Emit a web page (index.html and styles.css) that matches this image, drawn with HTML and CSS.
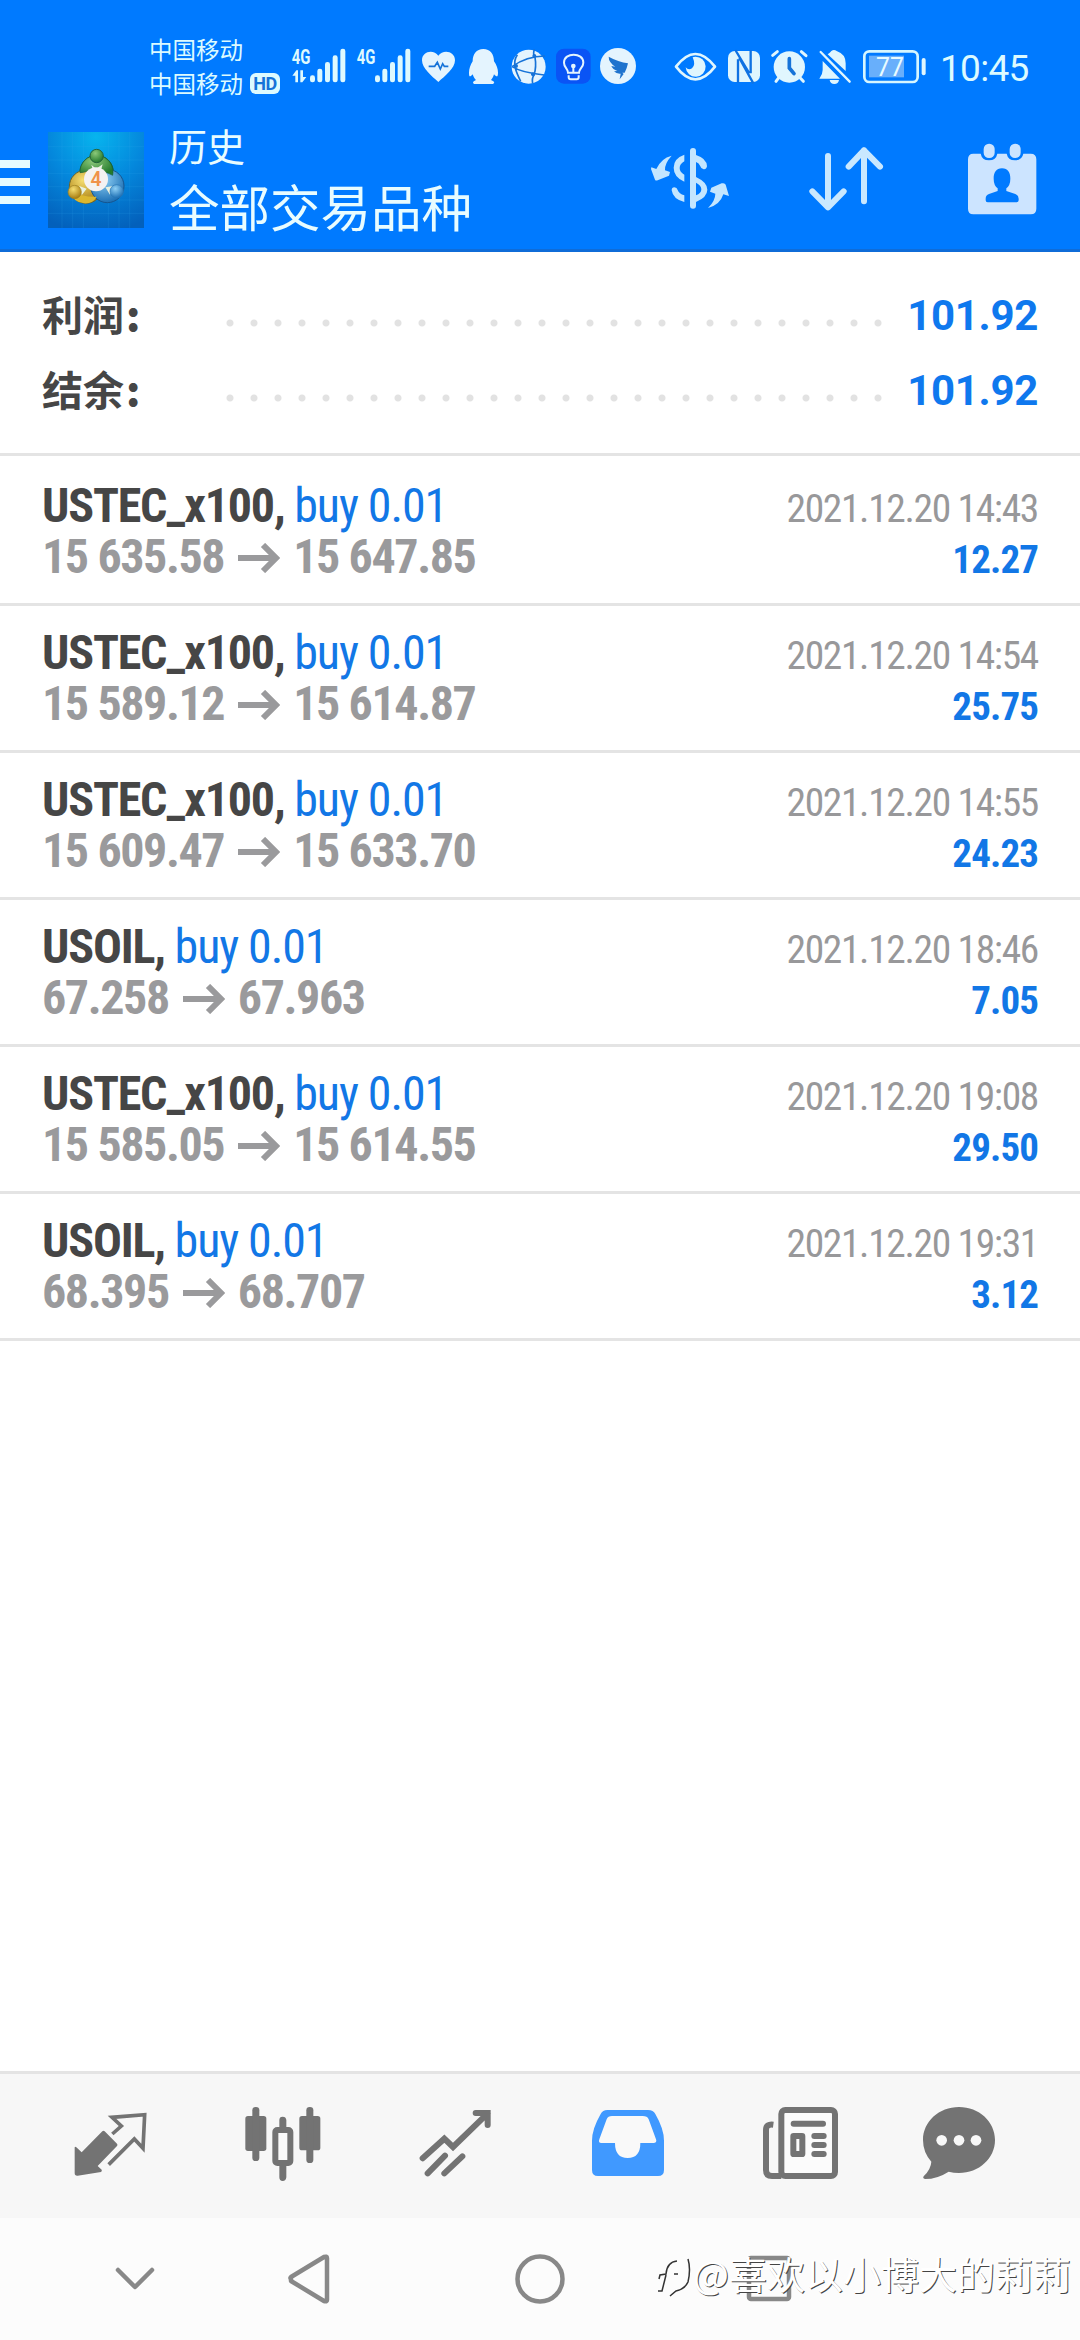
FILE: index.html
```html
<!DOCTYPE html>
<html lang="zh-CN">
<head>
<meta charset="utf-8">
<title>历史</title>
<link rel="stylesheet" href="styles.css">
</head>
<body>
<div class="screen">
  <header class="top">
    <div class="status">
      <div class="carriers">
        <div class="carrier">中国移动</div>
        <div class="carrier">中国移动<span class="hd">HD</span></div>
      </div>
      <svg class="signals" width="126" height="50" viewBox="480 60 378 150">
        <g fill="#def9fe">
          <text class="net" x="485" y="131" textLength="56" lengthAdjust="spacingAndGlyphs">4G</text>
          <text class="net" x="680" y="131" textLength="56" lengthAdjust="spacingAndGlyphs">4G</text>
          <path d="M487 167l12-16h5v36h-8v-20zM511 151h8v20h10l-12 16h-6z"/>
          <g id="bars">
            <rect x="540" y="166" width="15" height="21" rx="7"/>
            <rect x="562" y="146" width="15" height="41" rx="7"/>
            <rect x="585" y="126" width="15" height="61" rx="7"/>
            <rect x="608" y="106" width="15" height="81" rx="7"/>
            <rect x="631" y="86" width="15" height="101" rx="7"/>
          </g>
          <use href="#bars" x="195"/>
        </g>
      </svg>
      <svg class="notices" width="220" height="50" viewBox="60 60 660 150">
        <g fill="#e4f4fe">
          <path d="M115 186C95 168 66 145 66 121C66 93 101 87 115 107C129 87 165 93 165 121C165 145 135 168 115 186z"/>
          <path d="M86 139h18l8-12 9 20 7-16 5 8h12" fill="none" stroke="#1673d8" stroke-width="5"/>
          <path d="M250 87C229 87 218 103 218 124C211 134 207 148 207 158C207 170 209 173 218 163C221 172 224 176 228 180C216 185 217 192 226 192H275C285 192 286 185 273 180C277 176 280 171 282 163C291 173 294 170 294 158C294 148 290 134 282 124C282 103 271 87 250 87z"/>
          <circle cx="386" cy="140" r="51"/>
          <g fill="none" stroke="#1673d8" stroke-width="5">
            <path d="M336 140Q380 108 435 108M403 88Q398 105 405 112Q410 140 402 165Q395 175 398 190M336 140Q365 158 432 165M352 104Q340 122 346 145Q350 160 362 184"/>
          </g>
          <circle cx="403" cy="108" r="6" fill="#1673d8"/><circle cx="348" cy="138" r="6" fill="#1673d8"/><circle cx="399" cy="163" r="6" fill="#1673d8"/>
          <rect x="468" y="86" width="104" height="105" rx="24" fill="#0a54f5"/>
          <g fill="none" stroke="#e4f4fe" stroke-width="6">
            <path d="M504 158C504 145 492 143 492 128C492 96 550 96 550 128C550 143 537 145 537 158zM520 138v20M506 166v6q0 6 6 6h18q6 0 6-6v-6"/>
          </g>
          <circle cx="520" cy="138" r="7"/>
          <circle cx="654" cy="138" r="54"/>
          <path d="M626 110Q655 126 684 130Q681 145 674 158L667 158L671 162L659 178L662 161Q649 162 642 154L652 153Q638 148 634 138L646 140Q626 127 626 110z" fill="#1e73ce"/>
        </g>
      </svg>
      <svg class="system" width="252" height="50" viewBox="42 60 756 150">
        <g fill="#e0f6fe">
          <path d="M48 140Q106 64 165 140Q106 216 48 140z" fill="none" stroke="#e0f6fe" stroke-width="8" stroke-linejoin="round"/>
          <path d="M106 110A30 30 0 1 1 77 142Q85 152 96 145Q108 135 98 112z"/>
          <rect x="204" y="93" width="96" height="93" rx="20"/>
          <path d="M226 90L268 160M234 118V188M272 90V160M238 114L280 190" fill="none" stroke="#0f72e2" stroke-width="7"/>
          <circle cx="388" cy="141" r="47"/>
          <path d="M338 106l14-11M424 95l14 12M348 184l9-12M420 173l10 11" stroke="#e0f6fe" stroke-width="9" stroke-linecap="round"/>
          <path d="M388 116v28l14 17" fill="none" stroke="#1673d8" stroke-width="11" stroke-linecap="round"/>
          <path d="M488 123L540 176H478Q488 164 488 150zM503 103Q510 98 514 93Q522 87 530 93Q557 102 557 130V153zM509 180h28q-2 12-14 12t-14-12z"/>
          <path d="M482 96l87 89" stroke="#e0f6fe" stroke-width="7" stroke-linecap="round"/>
          <rect x="613" y="94" width="160" height="92" rx="15" fill="none" stroke="#d6f6ff" stroke-width="8"/>
          <rect x="627" y="107" width="105" height="65" fill="#68affb"/>
          <rect x="785" y="114" width="12" height="52" rx="6"/>
          <text class="charge" x="648" y="169" textLength="84" lengthAdjust="spacingAndGlyphs">77</text>
        </g>
      </svg>
      <span class="clock">10:45</span>
    </div>
    <div class="bar">
      <div class="menu"><i></i><i></i><i></i></div>
      <svg class="logo" width="96" height="96" viewBox="144 66 288 288">
        <defs>
          <radialGradient id="sky" cx=".5" cy=".05" r="1"><stop offset="0" stop-color="#07b4ee"/><stop offset=".5" stop-color="#0487dc"/><stop offset="1" stop-color="#0360bb"/></radialGradient>
          <radialGradient id="gr" cx=".4" cy=".3" r=".7"><stop offset="0" stop-color="#8cc97a"/><stop offset="1" stop-color="#247a2c"/></radialGradient>
          <radialGradient id="ye" cx=".4" cy=".3" r=".7"><stop offset="0" stop-color="#f5de71"/><stop offset="1" stop-color="#a87d12"/></radialGradient>
          <radialGradient id="bl" cx=".4" cy=".3" r=".7"><stop offset="0" stop-color="#8fd0f5"/><stop offset="1" stop-color="#1d70b5"/></radialGradient>
        </defs>
        <rect x="144" y="66" width="288" height="288" fill="url(#sky)"/>
        <path d="M186 66v288M218 66v288M250 66v288M325 66v288M357 66v288M389 66v288M144 110h288M144 150h288M144 190h288M144 230h288M144 270h288M144 310h288" stroke="#3fb6f0" stroke-opacity=".22" stroke-width="2"/>
        <circle cx="290" cy="186" r="50" fill="url(#gr)" stroke="#175f38" stroke-width="3"/>
        <circle cx="258" cy="230" r="50" fill="url(#ye)" stroke="#6e6428" stroke-width="3"/>
        <circle cx="322" cy="228" r="50" fill="url(#bl)" stroke="#16558f" stroke-width="3"/>
        <path d="M290 136a50 50 0 0 1 48 60q-14-10-30-8q-26-18-48-4q-10 4-20 4a50 50 0 0 1 50-52z" fill="url(#gr)" stroke="#175f38" stroke-width="2"/>
        <path d="M210 242q40 20 80 18q-12 22-38 20q-34-4-42-38z" fill="#dbb72f"/>
        <path d="M274 164l14 12 20-13-5 18h-24zM238 228l22 8-15 20zM340 228l-24 4 14 22z" fill="#e8f1e0"/>
        <circle cx="290" cy="138" r="20" fill="url(#gr)" stroke="#24633a" stroke-width="3"/>
        <circle cx="224" cy="246" r="20" fill="url(#ye)" stroke="#9c7f1e" stroke-width="2"/>
        <circle cx="350" cy="244" r="20" fill="url(#bl)" stroke="#2a77b5" stroke-width="2"/>
        <circle cx="288" cy="208" r="36" fill="#f4f2f2"/>
        <text class="four" x="288" y="229">4</text>
      </svg>
      <div class="titles">
        <div class="title">历史</div>
        <div class="subtitle">全部交易品种</div>
      </div>
      <div class="actions">
        <svg width="80" height="64" viewBox="90 80 240 192">
          <g fill="#c4e6ff">
            <rect x="210" y="83" width="18" height="182" rx="9"/>
            <path d="M193 103v20q-14 8-14 20t14 20v21q-32-14-32-42t32-39zM228 104q32 10 33 34q-2 10-10 9t-10-9q-4-10-13-13zM228 170q34 16 34 38t-34 37v-20q16-6 16-18t-16-20zM155 210q0-9 8-9t10 8q4 12 20 16v20q-34-8-38-35z"/>
            <path d="M155 106q-22 24-20 44l15 5-3 11-34 14q-6 2-8-2l-12-32 1-5 15 5q14-32 46-40z"/>
            <path d="M264 263q22-22 22-43l-16-6 4-12 31-13q10-2 12 4l10 34-17-5q-10 32-46 41z"/>
          </g>
        </svg>
        <svg class="sort" width="76" height="66" viewBox="564 80 228 198">
          <path d="M624 110v154M577 216l47 48 47-48M732 246V93M686 142l46-49 48 49" fill="none" stroke="#c9e8ff" stroke-width="18" stroke-linecap="round" stroke-linejoin="round"/>
        </svg>
        <svg width="70" height="74" viewBox="1041 66 210 222">
          <path d="M1060 101h22q4 20 25 20t25-20h28q4 20 25 20t25-20h22q17 0 17 17v148q0 17-17 17h-172q-16 0-16-17V118q0-17 16-17z" fill="#cce4ff"/>
          <rect x="1091" y="71" width="33" height="43" rx="16" fill="#cce4ff"/><rect x="1169" y="71" width="33" height="43" rx="16" fill="#cce4ff"/>
          <path d="M1146 145c18 0 25 14 25 31q0 20-12 29v8l27 9q10 4 10 14v5q0 6-7 6h-86q-6 0-6-6v-5q0-10 10-14l26-9v-8q-12-9-12-29c0-17 7-31 25-31z" fill="#007aff"/>
        </svg>
      </div>
    </div>
  </header>

  <section class="summary">
    <div class="sum"><span class="label">利润<b>:</b></span><span class="dots"></span><span class="total">101.92</span></div>
    <div class="sum"><span class="label">结余<b>:</b></span><span class="dots"></span><span class="total">101.92</span></div>
  </section>

  <main class="deals">
    <article class="deal">
      <div class="line"><span><b class="sym">USTEC_x100,</b> <span class="side">buy 0.01</span></span><time>2021.12.20 14:43</time></div>
      <div class="line"><span class="price">15 635.58<svg class="arrow" viewBox="0 0 42 30"><path d="M0 15H38M25 2L38 15L25 28"/></svg>15 647.85</span><b class="profit">12.27</b></div>
    </article>
    <article class="deal">
      <div class="line"><span><b class="sym">USTEC_x100,</b> <span class="side">buy 0.01</span></span><time>2021.12.20 14:54</time></div>
      <div class="line"><span class="price">15 589.12<svg class="arrow" viewBox="0 0 42 30"><path d="M0 15H38M25 2L38 15L25 28"/></svg>15 614.87</span><b class="profit">25.75</b></div>
    </article>
    <article class="deal">
      <div class="line"><span><b class="sym">USTEC_x100,</b> <span class="side">buy 0.01</span></span><time>2021.12.20 14:55</time></div>
      <div class="line"><span class="price">15 609.47<svg class="arrow" viewBox="0 0 42 30"><path d="M0 15H38M25 2L38 15L25 28"/></svg>15 633.70</span><b class="profit">24.23</b></div>
    </article>
    <article class="deal">
      <div class="line"><span><b class="sym">USOIL,</b> <span class="side">buy 0.01</span></span><time>2021.12.20 18:46</time></div>
      <div class="line"><span class="price">67.258<svg class="arrow" viewBox="0 0 42 30"><path d="M0 15H38M25 2L38 15L25 28"/></svg>67.963</span><b class="profit">7.05</b></div>
    </article>
    <article class="deal">
      <div class="line"><span><b class="sym">USTEC_x100,</b> <span class="side">buy 0.01</span></span><time>2021.12.20 19:08</time></div>
      <div class="line"><span class="price">15 585.05<svg class="arrow" viewBox="0 0 42 30"><path d="M0 15H38M25 2L38 15L25 28"/></svg>15 614.55</span><b class="profit">29.50</b></div>
    </article>
    <article class="deal">
      <div class="line"><span><b class="sym">USOIL,</b> <span class="side">buy 0.01</span></span><time>2021.12.20 19:31</time></div>
      <div class="line"><span class="price">68.395<svg class="arrow" viewBox="0 0 42 30"><path d="M0 15H38M25 2L38 15L25 28"/></svg>68.707</span><b class="profit">3.12</b></div>
    </article>
  </main>

  <nav class="tabs">
    <svg width="76" height="78" viewBox="98 135 228 234">
      <path d="M103 262q2-3 5 0l16 15 62-63q3-3 7 0l37 37q3 4 0 7l-58 60 12 11q2 4-2 7l-70 11q-9 1-9-8z" fill="#737373"/>
      <path d="M216 222l27-24-28-26 98-8-5 101-26-28-77 77" fill="none" stroke="#737373" stroke-width="11"/>
    </svg>
    <svg width="76" height="78" viewBox="611 135 228 234">
      <g fill="#737373"><rect x="612" y="168" width="63" height="105" rx="8"/><rect x="633" y="141" width="21" height="162" rx="10"/><rect x="774" y="168" width="63" height="103" rx="8"/><rect x="795" y="141" width="21" height="168" rx="10"/><path d="M714 202v-22q0-10 10-10t11 10v22zM714 316v36q0 11 10 11t11-11v-36z"/></g>
      <rect x="702" y="210" width="45" height="99" rx="6" fill="#fafafa" stroke="#737373" stroke-width="18"/>
    </svg>
    <svg width="76" height="78" viewBox="1129 135 228 234">
      <path d="M1143 295l65-59 26 25 104-101M1302 159h36v36M1158 340l52-53M1208 340l54-51" fill="none" stroke="#737373" stroke-width="18" stroke-linecap="round" stroke-linejoin="miter"/>
    </svg>
    <svg width="76" height="78" viewBox="86 135 228 234">
      <path d="M138 150h122q16 0 22 12 26 45 26 80v88q0 18-18 18H110q-18 0-18-18v-88q0-35 26-80 6-12 20-12z" fill="#4099ff"/>
      <path d="M152 168q-12 0-16 10l-22 60q-4 11 6 11h41q0 45 38 45t38-45h39q12 0 8-11l-22-60q-4-10-18-10z" fill="#f9f9f9"/>
    </svg>
    <svg width="76" height="78" viewBox="607 135 228 234">
      <rect x="662" y="150" width="161" height="198" rx="12" fill="#fbfbfb" stroke="#737373" stroke-width="18"/>
      <path d="M638 194q-22-3-22 16v120q0 18 18 18h28" fill="none" stroke="#737373" stroke-width="18"/>
      <path d="M699 191.500h88M761 228h28M761 255h28M761 282h28" stroke="#737373" stroke-width="18" stroke-linecap="round"/>
      <rect x="698" y="228" width="27" height="54" rx="1" fill="#fbfbfb" stroke="#737373" stroke-width="18" stroke-linejoin="round"/>
    </svg>
    <svg class="chat" width="76" height="78" viewBox="1080 135 228 234">
      <path d="M1194 141c60 0 108 44 108 99s-48 99-108 99q-16 0-31-4-34 22-71 22-8-2-4-8 22-22 23-44-25-28-25-65c0-55 48-99 108-99z" fill="#737373"/>
      <g fill="#f8f8f8"><circle cx="1142" cy="241" r="16"/><circle cx="1194" cy="241" r="16"/><circle cx="1245" cy="241" r="16"/></g>
    </svg>
  </nav>

  <footer class="system-nav">
    <svg width="720" height="60" viewBox="100 2249 720 60">
      <g fill="none" stroke="#888" stroke-width="4.500" stroke-linecap="round" stroke-linejoin="round">
        <path d="M118 2270l17 17 17-17M291 2279q-1-1 0-2l33-20q3-1 3 1v42q0 2-3 1l-33-20z"/>
        <circle cx="540" cy="2279" r="22.500"/>
        <rect x="749" y="2258" width="40" height="41" rx="2"/>
      </g>
    </svg>
    <div class="watermark">
      <svg width="36" height="50" viewBox="0 0 36 50">
        <path d="M2 31l1-4 6-1q1-12 11-13M31 11q3 10 0 23-3 7-12 9l-6 5M9 27L5 43H1M17 26h4" fill="none" stroke="#333" stroke-width="1.500"/>
      </svg>
      <span>@喜欢以小博大的莉莉</span>
    </div>
  </footer>
</div>
</body>
</html>
```

FILE: styles.css
```css
* { box-sizing: border-box; }
body { margin: 0; background: #fff; font-family: Roboto, "Noto Sans CJK SC", sans-serif; }
svg { display: block; flex: none; }
.screen { width: 1080px; height: 2340px; display: flex; flex-direction: column; overflow: hidden; }

/* header */
.top { height: 252px; flex: none; background: #007aff; border-bottom: 3px solid #0f6cd8; }
.status { height: 125px; display: flex; align-items: flex-start; padding: 32px 0 0 149px; color: #dcfaff; }
.carriers { width: 141px; }
.carrier { height: 34px; display: flex; align-items: center; font-size: 23.500px; line-height: 34px; font-family: "Noto Sans CJK SC", sans-serif; }
.hd { margin-left: 7px; width: 30px; height: 21px; border-radius: 6px; background: #dcfaff; color: #1673d8; font: 700 18px/21px Roboto, sans-serif; text-align: center; letter-spacing: -.5px; }
.signals, .notices, .system { margin-top: 8px; }
.net { font: 700 60px Roboto, sans-serif; }
.notices { margin-left: 4px; }
.system { margin-left: 34px; }
.charge { font: 400 76px Roboto, sans-serif; fill: #e8fbff; }
.clock { margin: 15px 0 0 14px; font-size: 37px; line-height: 44px; letter-spacing: -.7px; }

.bar { height: 124px; display: flex; align-items: flex-start; }
.menu { width: 48px; display: grid; gap: 10px; padding-top: 35px; }
.menu i { width: 30px; height: 8px; background: #e6fbff; }
.logo { margin-top: 7px; }
.four { font: 600 58px Roboto, sans-serif; fill: #f0924a; text-anchor: middle; }
.titles { margin: -3px 0 0 25px; flex: 1; color: #e8fcff; font-family: "Noto Sans CJK SC", sans-serif; }
.title { font-size: 38px; line-height: 46px; }
.subtitle { font-size: 50.500px; line-height: 74px; white-space: nowrap; }
.actions { width: 430px; display: flex; align-items: center; height: 108px; }
.sort { margin: 0 83px 0 78px; }

/* totals */
.summary { height: 204px; flex: none; padding: 25px 42px 0; border-bottom: 3px solid #e4e4e4; }
.sum { height: 75px; display: flex; align-items: center; }
.label { width: 182px; color: #464646; font: 700 41px/73px "Noto Sans CJK SC", sans-serif; white-space: nowrap; padding-bottom: 2px; }
.label b { margin-left: 2px; }
.dots { width: 672px; height: 8px; margin-top: 16px; background: radial-gradient(circle at center, #e2e2e2 3px, transparent 4px) -6px 0 / 24px 8px repeat-x; }
.total { flex: 1; text-align: right; color: #0f78ee; font-size: 42px; font-weight: 700; line-height: 73px; padding-top: 2px; letter-spacing: -.300px; }

/* deals */
.deals { flex: 1; padding-top: 3px; }
.deal { height: 147px; padding: 21px 42px 0; border-bottom: 3px solid #e4e4e4; font-family: "Roboto Condensed", Roboto, sans-serif; font-stretch: 75%; font-size: 48px; letter-spacing: -1.200px; }
.line { height: 51px; line-height: 51px; display: flex; justify-content: space-between; align-items: baseline; white-space: nowrap; }
.sym { color: #464646; }
.side { color: #1277e6; letter-spacing: -1.100px; }
time { font-size: 39.500px; letter-spacing: -1.350px; color: #98989a; }
.price { display: flex; align-items: baseline; font-weight: 700; color: #9a9a9c; letter-spacing: -1.400px; }
.arrow { width: 42px; height: 30px; margin: 0 13px 0 14px; fill: none; stroke: #9a9a9c; stroke-width: 6; }
.profit { font-size: 39px; color: #1277e6; letter-spacing: -.900px; }

/* tab bar */
.tabs { height: 147px; flex: none; display: flex; gap: 96.500px; padding: 31px 0 0 72.500px; background: #f7f7f7; border-top: 3px solid #e4e4e4; }
.chat { margin-left: -14.500px; }

/* system navigation */
.system-nav { position: relative; height: 122px; flex: none; padding: 31px 0 0 100px; background: #fcfcfc; }
.watermark { position: absolute; left: 657px; top: 30px; display: flex; align-items: center; color: #fff; font: 400 38px/46px "Noto Sans CJK SC", sans-serif; white-space: nowrap; text-shadow: 1px 1px 0 #444; }
```
